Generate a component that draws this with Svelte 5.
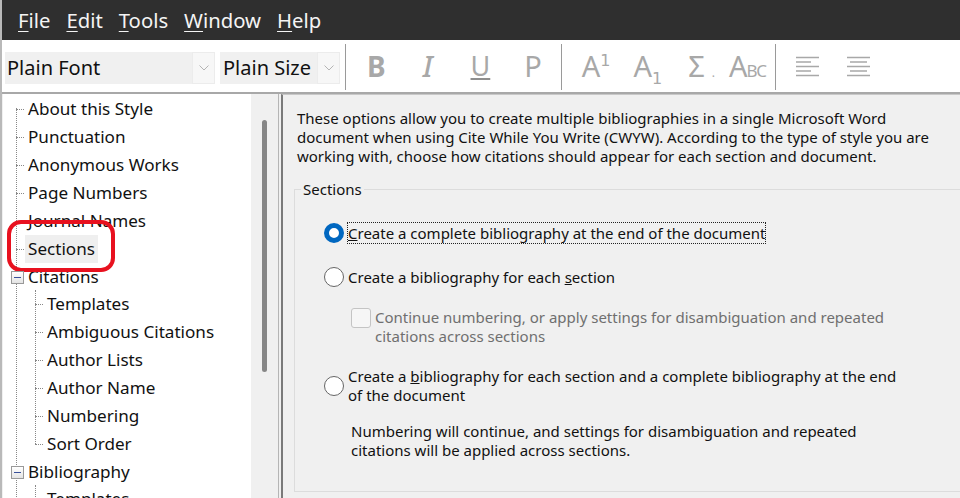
<script>
  const menus = [
    { key: 'F', rest: 'ile' },
    { key: 'E', rest: 'dit' },
    { key: 'T', rest: 'ools' },
    { key: 'W', rest: 'indow' },
    { key: 'H', rest: 'elp' }
  ];
  const top = ['About this Style', 'Punctuation', 'Anonymous Works', 'Page Numbers', 'Journal Names', 'Sections'];
  const citations = ['Templates', 'Ambiguous Citations', 'Author Lists', 'Author Name', 'Numbering', 'Sort Order'];
</script>

<div class="window">
  <nav class="menubar">
    {#each menus as m}
      <span class="menu"><u>{m.key}</u>{m.rest}</span>
    {/each}
  </nav>

  <div class="toolbar">
    <div class="combo font"><span>Plain Font</span><i class="drop"><svg width="10" height="6" viewBox="0 0 10 6"><path d="M.5.5 5 5 9.500.5" fill="none" stroke="#b4b4b4"/></svg></i></div>
    <div class="combo size"><span>Plain Size</span><i class="drop"><svg width="10" height="6" viewBox="0 0 10 6"><path d="M.5.5 5 5 9.500.5" fill="none" stroke="#b4b4b4"/></svg></i></div>
    <div class="sep s1"></div>
    <div class="tool b">B</div>
    <div class="tool it">I</div>
    <div class="tool un">U</div>
    <div class="tool pl">P</div>
    <div class="sep s2"></div>
    <div class="tool sup">A<sup>1</sup></div>
    <div class="tool sub">A<sub>1</sub></div>
    <div class="tool sig">Σ<small>.</small></div>
    <div class="tool abc">A<small>BC</small></div>
    <div class="sep s3"></div>
    <svg class="align first" width="24" height="21" viewBox="0 0 24 21" stroke="#a8a8a8" stroke-width="1.300">
      <path d="M0 1.500h23M0 6h15M0 10.500h23M0 15h15M0 19.500h23"/>
    </svg>
    <svg class="align" width="24" height="21" viewBox="0 0 24 21" stroke="#a8a8a8" stroke-width="1.300">
      <path d="M0 1.500h23M3 6h17M0 10.500h23M3 15h17M0 19.500h23"/>
    </svg>
  </div>

  <div class="body">
    <aside class="tree">
      <div class="list">
        <ul class="level root">
          {#each top as t}
            <li class="row"><span class="label" class:selected={t === 'Sections'}>{t}</span></li>
          {/each}
          <li class="row parent"><i class="box"></i><span class="label">Citations</span></li>
          <ul class="level child">
            {#each citations as t}
              <li class="row"><span class="label">{t}</span></li>
            {/each}
          </ul>
          <li class="row parent"><i class="box"></i><span class="label">Bibliography</span></li>
          <ul class="level child">
            <li class="row"><span class="label">Templates</span></li>
          </ul>
        </ul>
      </div>
      <div class="scrolltrack"><div class="thumb"></div></div>
    </aside>

    <section class="pane">
      <p class="intro">These options allow you to create multiple bibliographies in a single Microsoft Word document when using Cite While You Write (CWYW). According to the type of style you are working with, choose how citations should appear for each section and document.</p>

      <fieldset>
        <legend>Sections</legend>

        <div class="option first">
          <i class="radio on"></i>
          <span class="focus"><u>C</u>reate a complete bibliography at the end of the document</span>
        </div>

        <div class="option second">
          <i class="radio"></i>
          <span>Create a bibliography for each <u>s</u>ection</span>
        </div>

        <div class="check">
          <i class="checkbox"></i>
          <span>Continue numbering, or apply settings for disambiguation and repeated citations across sections</span>
        </div>

        <div class="option third">
          <i class="radio"></i>
          <span>Create a <u>b</u>ibliography for each section and a complete bibliography at the end of the document</span>
        </div>

        <p class="note">Numbering will continue, and settings for disambiguation and repeated citations will be applied across sections.</p>
      </fieldset>
    </section>
  </div>

  <div class="callout"></div>
</div>

<style>
  :global(body) {
    margin: 0;
    overflow: hidden;
  }

  .window {
    position: relative;
    width: 960px;
    height: 498px;
    overflow: hidden;
    background: #f0f0f0;
    font-family: "Noto Sans", "Open Sans", sans-serif;
    color: #111;
    border-left: 2px solid #b9b9b9;
    box-sizing: border-box;
  }

  .menubar {
    height: 40px;
    background: #2f2f2f;
    color: #f4f4f4;
    display: flex;
    align-items: center;
    gap: 16px;
    padding-left: 16px;
    font-size: 20.300px;
  }
  .menu u {
    text-underline-offset: 3px;
    text-decoration-thickness: 1px;
  }

  .toolbar {
    height: 52px;
    background: #fff;
    border-bottom: 2px solid #a8a8a8;
    display: flex;
    align-items: center;
  }

  .combo {
    height: 32px;
    margin-top: 3px;
    background: #f0f0f0;
    display: flex;
    align-items: center;
    justify-content: space-between;
    font-size: 20px;
    color: #111;
    padding-left: 2px;
    box-sizing: border-box;
    flex: none;
  }
  .combo.font { width: 210px; margin-left: 3px; }
  .combo.size { width: 120px; margin-left: 5px; padding-left: 3px; }
  .drop {
    width: 23px;
    height: 32px;
    background: #f7f7f7;
    border: 1px solid #ececec;
    box-sizing: border-box;
    display: flex;
    align-items: center;
    justify-content: center;
  }

  .sep {
    width: 1px;
    height: 46px;
    background: #9a9a9a;
    margin-top: 1px;
    flex: none;
  }
  .sep.s1 { margin-left: 5px; }
  .sep.s2 { margin-left: 19px; }
  .sep.s3 { margin-left: 10px; }

  .tool {
    color: #a8a8a8;
    font-size: 29px;
    font-weight: 400;
    line-height: 1;
    flex: none;
    white-space: nowrap;
    margin-top: -1px;
  }
  .tool.b { font-weight: 700; margin-left: 21px; font-size: 28px; }
  .tool.it { font-style: italic; margin-left: 37px; font-weight: 500; }
  .tool.un {
    margin-left: 38px;
    font-size: 27px;
    text-decoration: underline;
    text-decoration-thickness: 2px;
    text-underline-offset: 2px;
    text-decoration-color: #8e8e8e;
  }
  .tool.pl { margin-left: 34px; }
  .tool sup, .tool sub {
    font-family: "DejaVu Sans", sans-serif;
    font-size: 16px;
    font-weight: 400;
    line-height: 0;
  }
  .tool.sup { margin-left: 20px; }
  .tool.sub { margin-left: 23px; }
  .tool.sig { margin-left: 26px; }
  .tool.sig small { font-size: 12px; margin-left: 7px; }
  .tool.abc { margin-left: 14px; letter-spacing: -1px; }
  .tool.abc small { font-size: 17px; letter-spacing: -1.500px; }

  .align { flex: none; margin-top: 0; }
  .align.first { margin-left: 20px; margin-right: 27px; }

  .body {
    display: flex;
    height: 404px;
    padding-left: 1px;
  }

  .tree {
    display: flex;
    width: 275px;
    height: 404px;
    border-right: 1px solid #b5b5b5;
    flex: none;
    overflow: hidden;
  }
  .list {
    width: 248px;
    background: #fff;
    font-size: 17.100px;
    overflow: hidden;
  }
  .level {
    list-style: none;
    margin: 0;
    padding: 0;
  }
  .root {
    padding-top: 1px;
    position: relative;
  }
  .row {
    height: 28px;
    display: flex;
    align-items: center;
    padding-left: 22px;
    position: relative;
    white-space: nowrap;
  }
  .root > .row::before {
    content: "";
    position: absolute;
    left: 13px;
    width: 8px;
    top: 50%;
    border-top: 1px dotted #888;
  }
  .root::before {
    content: "";
    position: absolute;
    left: 13px;
    top: 14px;
    bottom: 0;
    border-left: 1px dotted #888;
  }
  .child {
    position: relative;
    margin-top: -1px;
  }
  .child::before {
    content: "";
    position: absolute;
    left: 32px;
    top: 0;
    bottom: 14px;
    border-left: 1px dotted #888;
  }
  .child .row { padding-left: 41px; }
  .child .row::before {
    content: "";
    position: absolute;
    left: 32px;
    width: 8px;
    top: 50%;
    border-top: 1px dotted #888;
  }
  .label {
    padding: 0 3px;
    height: 28px;
    line-height: 27px;
  }
  .label.selected { background: #efefef; }

  .box {
    position: absolute;
    left: 8px;
    top: 8px;
    width: 11px;
    height: 11px;
    border: 1px solid #999;
    background: linear-gradient(#fff, #e4e4e4);
    z-index: 1;
  }
  .box::after {
    content: "";
    position: absolute;
    left: 2px;
    right: 2px;
    top: 5px;
    height: 1px;
    background: #39509a;
  }

  .scrolltrack {
    flex: 1;
    background: #f0f0f0;
    position: relative;
  }
  .thumb {
    width: 5px;
    height: 252px;
    margin: 26px 0 0 11px;
    background: #868686;
    border-radius: 3px;
  }

  .pane {
    margin-left: 2px;
    flex: 1;
    border-left: 2px solid #7a7a7a;
    border-top: 1px solid #c8c8c8;
    padding: 14px 0 0 14px;
    font-size: 15px;
    line-height: 19px;
    box-sizing: border-box;
    height: 404px;
  }
  .intro {
    margin: 0;
    width: 652px;
  }

  fieldset {
    margin: 14px -4px 0 -3px;
    padding: 0 0 0 29px;
    border: 1px solid #dcdcdc;
    border-right: none;
    height: 312px;
    box-sizing: border-box;
  }
  legend {
    padding: 0 2px;
    margin-left: -23px;
  }

  .option {
    display: flex;
    align-items: center;
    gap: 4px;
  }
  .option.first { margin-top: 24px; }
  .option.second { margin-top: 24px; }
  .option.third { margin-top: 21px; width: 579px; }
  .focus {
    outline: 1px dotted #222;
    line-height: 20px;
  }
  .radio {
    width: 20px;
    height: 20px;
    border: 1px solid #666;
    border-radius: 50%;
    background: #fff;
    box-sizing: border-box;
    flex: none;
  }
  .radio.on {
    border: 5.500px solid #0067c0;
  }
  .check {
    display: flex;
    margin: 21px 0 0 27px;
    gap: 4px;
    color: #6f6f6f;
    width: 540px;
    align-items: flex-start;
  }
  .checkbox {
    width: 20px;
    height: 20px;
    border: 1px solid #c4c4c4;
    border-radius: 3px;
    background: #f6f6f6;
    box-sizing: border-box;
    flex: none;
  }
  .note {
    margin: 17px 0 0 27px;
    width: 530px;
  }

  /* 红色标注框 */
  .callout {
    position: absolute;
    left: 5px;
    top: 220px;
    width: 108px;
    height: 52px;
    border: 4px solid #e8111f;
    border-radius: 14px;
    box-sizing: border-box;
  }
</style>
